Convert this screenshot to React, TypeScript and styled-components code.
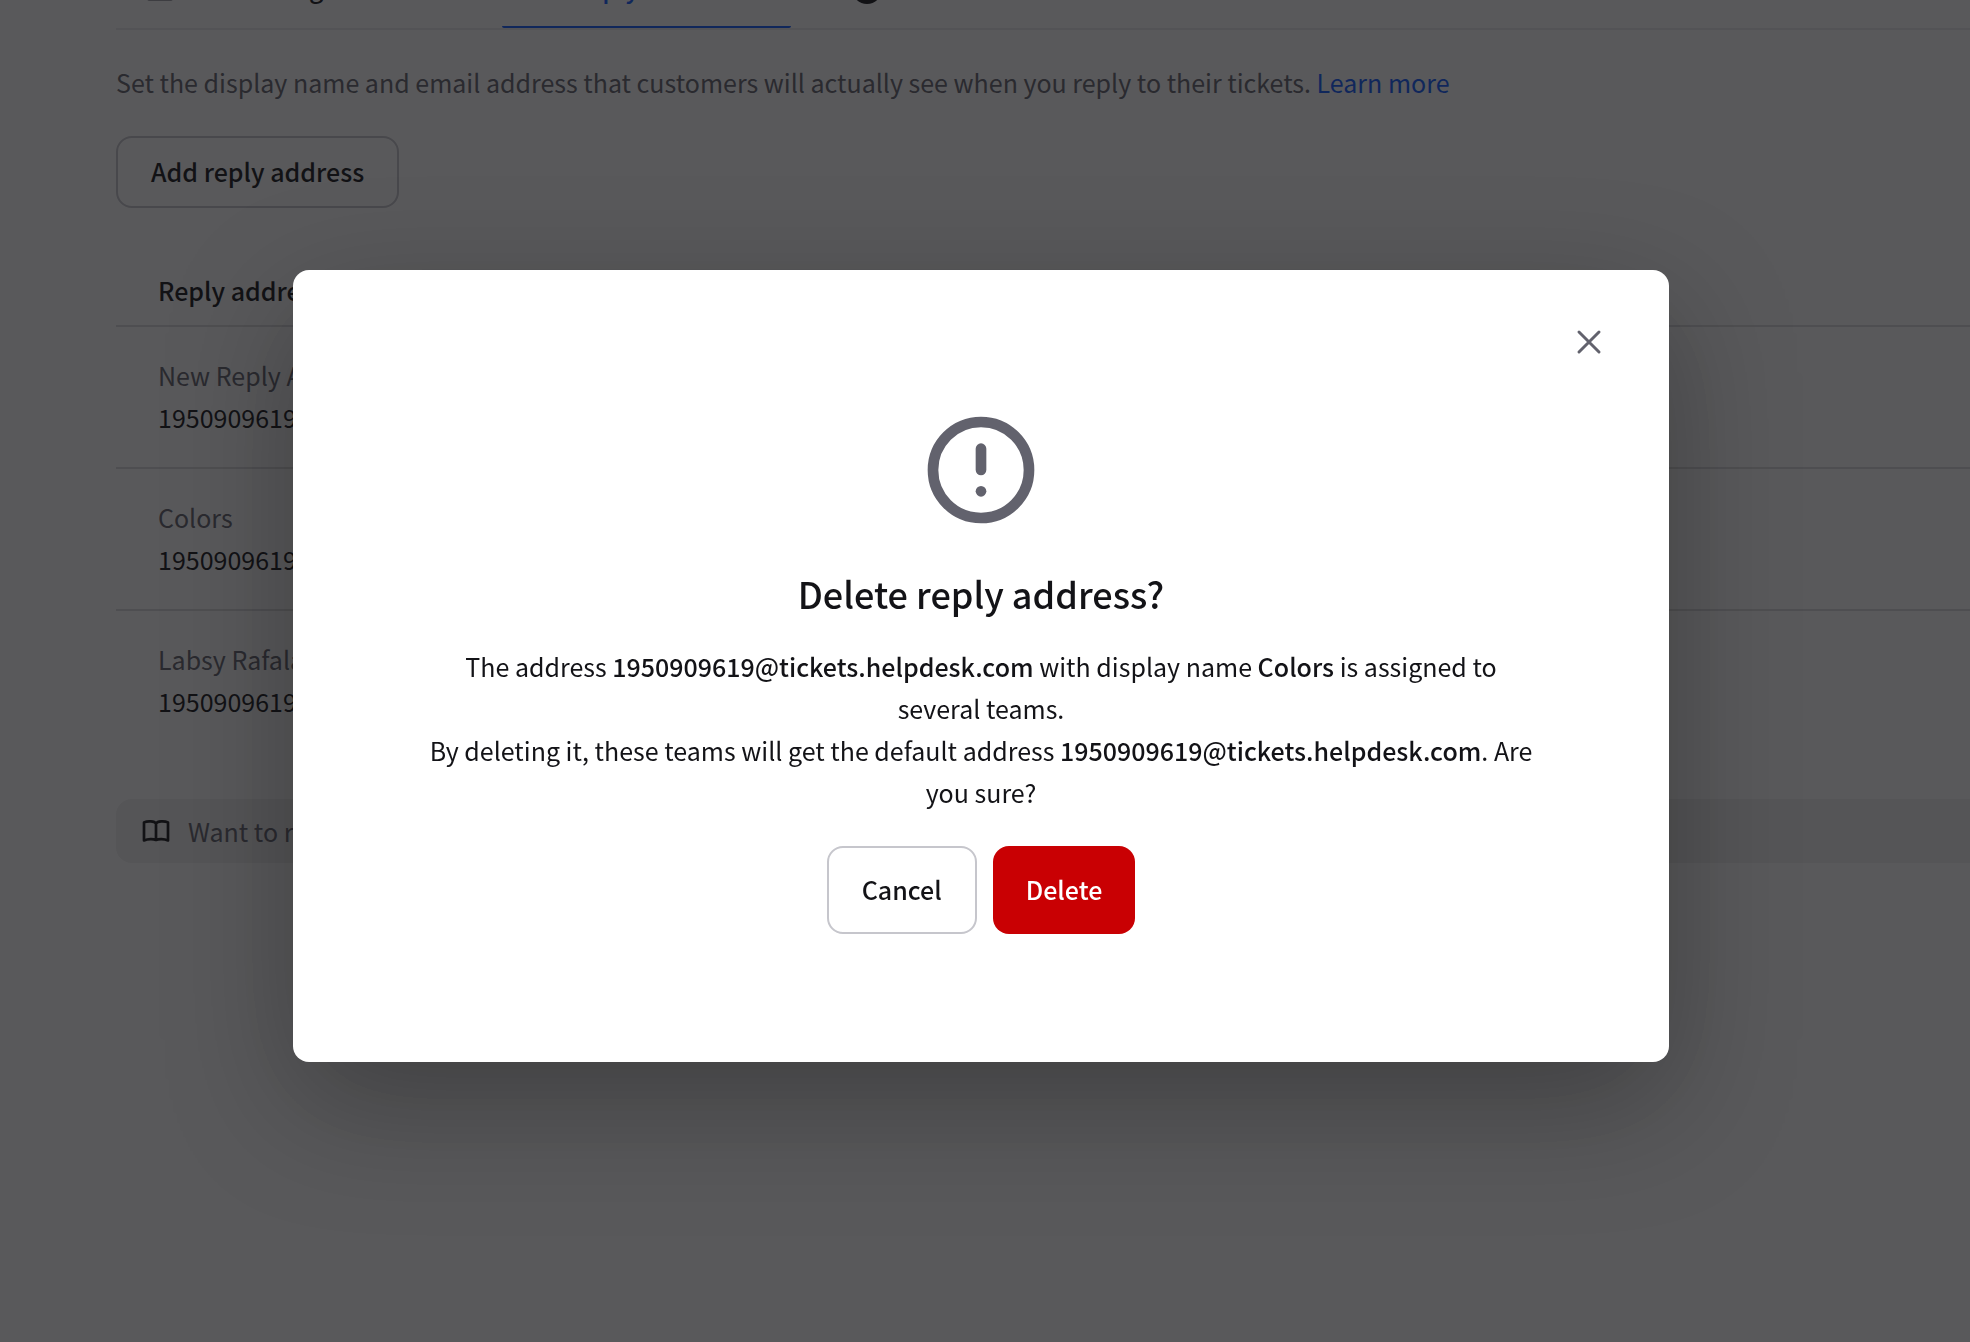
import React from "react";
import styled, { createGlobalStyle, css } from "styled-components";

const color = {
  text: "#131317",
  muted: "#62626d",
  link: "#0c58ff",
  border: "#c6c6cc",
  divider: "#dbdbdd",
  surface: "#f0f0f0",
  danger: "#c90003",
};

const GlobalStyle = createGlobalStyle`
  *, *::before, *::after { box-sizing: border-box; }
  body {
    margin: 0;
    background: #fff;
    color: ${color.text};
    font-family: "Noto Sans CJK SC", "Noto Sans", sans-serif;
    font-size: 25px;
    line-height: 42px;
    overflow: hidden;
  }
  button { font: inherit; color: inherit; cursor: pointer; }
`;

const Page = styled.main`
  min-height: 100vh;
  padding-left: 116px;
`;

const TabBar = styled.nav`
  display: flex;
  align-items: flex-end;
  height: 30px;
  overflow: hidden;
  border-bottom: 2px solid #ececee;
`;

const Tab = styled.button<{ $active?: boolean }>`
  display: flex;
  flex: none;
  align-items: center;
  gap: 12px;
  height: 82px;
  padding: 0 26px;
  border: 0;
  background: none;
  white-space: nowrap;
  font-weight: 500;
  ${(p) =>
    p.$active
      ? css`
          width: 289px;
          color: ${color.link};
          background: linear-gradient(${color.link}, ${color.link}) bottom / 100% 2px no-repeat;
          border-radius: 2px;
        `
      : css`
          min-width: 386px;
        `}
`;

const DomainTab = styled(Tab)`
  padding-left: 60px;
`;

const Intro = styled.p`
  margin: 31px 0 33px;
  color: ${color.muted};
`;

const Link = styled.a`
  color: ${color.link};
  text-decoration: none;
`;

const Button = styled.button<{ $size: "medium" | "large"; $kind?: "danger" }>`
  height: ${(p) => (p.$size === "large" ? 88 : 72)}px;
  padding: 0 33px 2px;
  border: ${(p) => (p.$kind === "danger" ? "0" : `2px solid ${color.border}`)};
  border-radius: 16px;
  background: ${(p) => (p.$kind === "danger" ? color.danger : "transparent")};
  color: ${(p) => (p.$kind === "danger" ? "#fff" : color.text)};
  font-weight: 500;
`;

const AddressTable = styled.table`
  width: 100%;
  margin-top: 48px;
  border-collapse: separate;
  border-spacing: 0;
  text-align: left;
`;

const HeadCell = styled.th`
  height: 71px;
  padding: 0 42px 2px;
  border-bottom: 2px solid ${color.divider};
  font-weight: 500;
`;

const Cell = styled.td`
  padding: 27px 42px 29px;
  tr:not(:last-child) > & {
    border-bottom: 2px solid ${color.divider};
  }
`;

const DisplayName = styled.div`
  color: ${color.muted};
`;

const HelpBar = styled.aside`
  display: flex;
  align-items: center;
  gap: 18px;
  height: 64px;
  margin-top: 48px;
  padding: 0 26px;
  border-radius: 16px 0 0 16px;
  background: ${color.surface};
  color: ${color.muted};
`;

const Overlay = styled.div`
  position: fixed;
  inset: 0;
  display: flex;
  align-items: center;
  justify-content: center;
  padding: 0 8px 10px 0;
  background: rgba(18, 18, 21, 0.7);
`;

const Modal = styled.section`
  position: relative;
  display: flex;
  flex-direction: column;
  align-items: center;
  width: 1376px;
  max-width: 100%;
  padding: 136px 130px 128px;
  border-radius: 16px;
  background: #fff;
  box-shadow: 0 40px 128px rgba(0, 0, 0, 0.3);
  text-align: center;
`;

const CloseButton = styled.button`
  position: absolute;
  top: 48px;
  right: 56px;
  display: grid;
  place-items: center;
  width: 48px;
  height: 48px;
  padding: 0;
  border: 0;
  background: none;
  color: ${color.muted};
`;

const AlertMark = styled.svg`
  width: 128px;
  height: 128px;
  color: ${color.muted};
`;

const Title = styled.h2`
  margin: 31px 0 24px;
  font-size: 36px;
  line-height: 56px;
  font-weight: 500;
`;

const Message = styled.p`
  margin: 0;
  strong {
    font-weight: 500;
  }
`;

const Actions = styled.div`
  display: flex;
  gap: 16px;
  margin-top: 33px;
`;

const MailIcon = () => (
  <svg width="32" height="32" viewBox="0 0 32 32" fill="none" stroke="#a0a0a8" strokeWidth="3" aria-hidden="true">
    <rect x="6.5" y="5" width="23" height="23.5" rx="1" />
    <path d="M6.5 8l11.5 9 11.5-9" />
  </svg>
);

const ReplyIcon = () => (
  <svg width="32" height="32" viewBox="0 0 32 32" fill="none" stroke="currentColor" strokeWidth="3" strokeLinecap="round" strokeLinejoin="round" aria-hidden="true">
    <path d="M12 5L4 12l8 7M4 12h14c6 0 9 4 9 10" />
  </svg>
);

const DomainIcon = () => (
  <svg width="32" height="32" viewBox="0 0 32 32" fill="currentColor" overflow="visible" aria-hidden="true">
    <circle cx="16" cy="18" r="15" />
  </svg>
);

const BookIcon = () => (
  <svg width="28" height="24" viewBox="0 0 28 24" fill="none" stroke={color.text} strokeWidth="2.7" strokeLinecap="round" strokeLinejoin="round" aria-hidden="true">
    <path d="M14 4.4C12.5 2.2 6 1.5 2 3.4V21.4C6 19.8 11.5 19.8 14 21C16.5 19.8 22 19.8 26 21.4V3.4C22 1.5 15.5 2.2 14 4.4V21" />
  </svg>
);

const addresses = [
  { name: "New Reply Address", email: "1950909619@tickets.helpdesk.com" },
  { name: "Colors", email: "1950909619@tickets.helpdesk.com" },
  { name: "Labsy Rafala", email: "1950909619@tickets.helpdesk.com" },
];

export default function App() {
  return (
    <>
      <GlobalStyle />
      <Page>
        <TabBar>
          <Tab type="button">
            <MailIcon />
            Forwarding addresses
          </Tab>
          <Tab type="button" $active>
            <ReplyIcon />
            Reply addresses
          </Tab>
          <DomainTab type="button" aria-label="Domains">
            <DomainIcon />
          </DomainTab>
        </TabBar>
        <Intro>
          Set the display name and email address that customers will actually see when you reply to their tickets.{" "}
          <Link href="#learn-more">Learn more</Link>
        </Intro>
        <Button type="button" $size="medium">
          Add reply address
        </Button>
        <AddressTable>
          <thead>
            <tr>
              <HeadCell scope="col">Reply addresses</HeadCell>
            </tr>
          </thead>
          <tbody>
            {addresses.map((a) => (
              <tr key={a.name}>
                <Cell>
                  <DisplayName>{a.name}</DisplayName>
                  {a.email}
                </Cell>
              </tr>
            ))}
          </tbody>
        </AddressTable>
        <HelpBar>
          <BookIcon />
          Want to read more?
        </HelpBar>
      </Page>
      <Overlay>
        <Modal role="dialog" aria-modal="true" aria-labelledby="delete-title">
          <CloseButton type="button" aria-label="Close">
            <svg width="28" height="28" viewBox="0 0 28 28" stroke="currentColor" strokeWidth="3" strokeLinecap="round" aria-hidden="true">
              <path d="M4 4L24 24M24 4L4 24" />
            </svg>
          </CloseButton>
          <AlertMark viewBox="0 0 24 24" fill="none" stroke="currentColor" strokeWidth="2" strokeLinecap="round" aria-hidden="true">
            <circle cx="12" cy="12" r="9" />
            <path d="M12 8v4" />
            <circle cx="12" cy="16" r="1" fill="currentColor" stroke="none" />
          </AlertMark>
          <Title id="delete-title">Delete reply address?</Title>
          <Message>
            The address <strong>1950909619@tickets.helpdesk.com</strong> with display name <strong>Colors</strong> is
            assigned to several teams.
            <br />
            By deleting it, these teams will get the default address <strong>1950909619@tickets.helpdesk.com</strong>.
            Are you sure?
          </Message>
          <Actions>
            <Button type="button" $size="large">
              Cancel
            </Button>
            <Button type="button" $size="large" $kind="danger">
              Delete
            </Button>
          </Actions>
        </Modal>
      </Overlay>
    </>
  );
}
